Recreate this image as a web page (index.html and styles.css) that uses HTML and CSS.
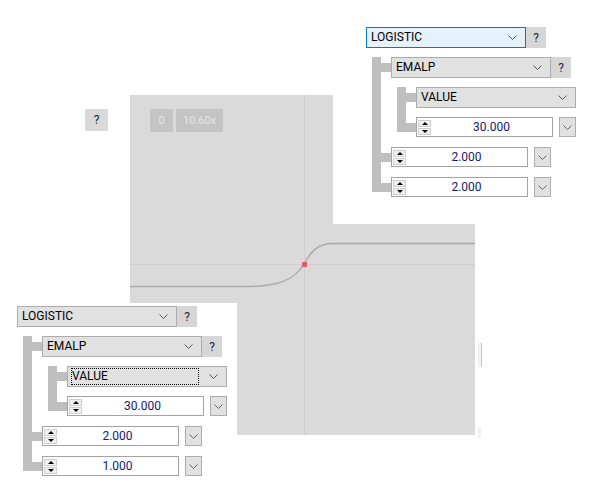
FILE: index.html
```html
<!DOCTYPE html>
<html lang="en">
<head>
    <meta charset="UTF-8">
    <title>Curve Editor</title>
    <link rel="stylesheet" href="styles.css">
</head>
<body>
<div id="desk">

    <div id="canvas">
        <svg class="plot" width="345" height="340" viewBox="0 0 345 340">
            <line x1="0" y1="169.5" x2="345" y2="169.5" stroke="#cecece" stroke-width="1"/>
            <line x1="174.5" y1="0" x2="174.5" y2="340" stroke="#cecece" stroke-width="1"/>
            <path d="M0 191.5 H117 C150 191.5 165 184 174 169 C181 156 188 148.5 203 148.5 H345" fill="none" stroke="#a9a9a9" stroke-width="1.4"/>
            <rect x="172" y="167" width="5" height="5" fill="#e0606a"/>
        </svg>
        <div class="tools">
            <div class="tool small">0</div>
            <div class="tool">10.60x</div>
        </div>
    </div>

    <div class="qbtn">?</div>

    <div class="mark mark-a"></div>
    <div class="mark mark-b"></div>

    <!-- upper editor -->
    <div class="panel panel-top">
        <div class="node">
            <div class="row">
                <div class="combo focus"><span class="label">LOGISTIC</span><svg class="chev" width="9" height="5"><polyline points="0.5,0.5 4.5,4.5 8.5,0.5" fill="none" stroke="#555" stroke-width="1"/></svg></div>
                <div class="help">?</div>
            </div>
            <div class="kids">
                <div class="node">
                    <div class="row">
                        <div class="combo"><span class="label">EMALP</span><svg class="chev" width="9" height="5"><polyline points="0.5,0.5 4.5,4.5 8.5,0.5" fill="none" stroke="#555" stroke-width="1"/></svg></div>
                        <div class="help">?</div>
                    </div>
                    <div class="kids">
                        <div class="node">
                            <div class="row">
                                <div class="combo"><span class="label">VALUE</span><svg class="chev" width="9" height="5"><polyline points="0.5,0.5 4.5,4.5 8.5,0.5" fill="none" stroke="#555" stroke-width="1"/></svg></div>
                            </div>
                        </div>
                        <div class="node">
                            <div class="row">
                                <div class="spinbox"><div class="spin"><div class="arr up"></div><div class="arr down"></div></div><span class="num">30.000</span></div>
                                <div class="drop"><svg width="9" height="5"><polyline points="0.5,0.5 4.5,4.5 8.5,0.5" fill="none" stroke="#666" stroke-width="1"/></svg></div>
                            </div>
                        </div>
                    </div>
                </div>
                <div class="node">
                    <div class="row">
                        <div class="spinbox"><div class="spin"><div class="arr up"></div><div class="arr down"></div></div><span class="num">2.000</span></div>
                        <div class="drop"><svg width="9" height="5"><polyline points="0.5,0.5 4.5,4.5 8.5,0.5" fill="none" stroke="#666" stroke-width="1"/></svg></div>
                    </div>
                </div>
                <div class="node">
                    <div class="row">
                        <div class="spinbox"><div class="spin"><div class="arr up"></div><div class="arr down"></div></div><span class="num">2.000</span></div>
                        <div class="drop"><svg width="9" height="5"><polyline points="0.5,0.5 4.5,4.5 8.5,0.5" fill="none" stroke="#666" stroke-width="1"/></svg></div>
                    </div>
                </div>
            </div>
        </div>
    </div>

    <!-- lower editor -->
    <div class="panel panel-bottom">
        <div class="node">
            <div class="row">
                <div class="combo"><span class="label">LOGISTIC</span><svg class="chev" width="9" height="5"><polyline points="0.5,0.5 4.5,4.5 8.5,0.5" fill="none" stroke="#555" stroke-width="1"/></svg></div>
                <div class="help">?</div>
            </div>
            <div class="kids">
                <div class="node">
                    <div class="row">
                        <div class="combo"><span class="label">EMALP</span><svg class="chev" width="9" height="5"><polyline points="0.5,0.5 4.5,4.5 8.5,0.5" fill="none" stroke="#555" stroke-width="1"/></svg></div>
                        <div class="help">?</div>
                    </div>
                    <div class="kids">
                        <div class="node">
                            <div class="row">
                                <div class="combo"><span class="label dotted">VALUE</span><svg class="chev" width="9" height="5"><polyline points="0.5,0.5 4.5,4.5 8.5,0.5" fill="none" stroke="#555" stroke-width="1"/></svg></div>
                            </div>
                        </div>
                        <div class="node">
                            <div class="row">
                                <div class="spinbox"><div class="spin"><div class="arr up"></div><div class="arr down"></div></div><span class="num">30.000</span></div>
                                <div class="drop"><svg width="9" height="5"><polyline points="0.5,0.5 4.5,4.5 8.5,0.5" fill="none" stroke="#666" stroke-width="1"/></svg></div>
                            </div>
                        </div>
                    </div>
                </div>
                <div class="node">
                    <div class="row">
                        <div class="spinbox"><div class="spin"><div class="arr up"></div><div class="arr down"></div></div><span class="num">2.000</span></div>
                        <div class="drop"><svg width="9" height="5"><polyline points="0.5,0.5 4.5,4.5 8.5,0.5" fill="none" stroke="#666" stroke-width="1"/></svg></div>
                    </div>
                </div>
                <div class="node">
                    <div class="row">
                        <div class="spinbox"><div class="spin"><div class="arr up"></div><div class="arr down"></div></div><span class="num">1.000</span></div>
                        <div class="drop"><svg width="9" height="5"><polyline points="0.5,0.5 4.5,4.5 8.5,0.5" fill="none" stroke="#666" stroke-width="1"/></svg></div>
                    </div>
                </div>
            </div>
        </div>
    </div>

</div>
</body>
</html>
```

FILE: styles.css
```css
body {
    margin: 0;
    background: #ffffff;
    font-family: Roboto, "Liberation Sans", Arial, sans-serif;
    font-size: 12px;
    color: #000;
}

#desk {
    position: relative;
    width: 608px;
    height: 502px;
    overflow: hidden;
}

/* graph area */
#canvas {
    position: absolute;
    left: 130px;
    top: 95px;
    width: 345px;
    height: 340px;
    background: #dadada;
}
#canvas .plot {
    position: absolute;
    left: 0;
    top: 0;
}
.tools {
    position: relative;
    display: flex;
    gap: 3px;
    padding: 14px 0 0 20px;
}
.tool {
    height: 23px;
    width: 47px;
    background: #c4c4c4;
    color: #e4e4e4;
    font-size: 11px;
    display: flex;
    align-items: center;
    justify-content: center;
}
.tool.small {
    width: 23px;
}

.qbtn {
    position: absolute;
    left: 85px;
    top: 109px;
    width: 23px;
    height: 22px;
    background: #d9d9d9;
    color: #1d2340;
    display: flex;
    align-items: center;
    justify-content: center;
}

.mark {
    position: absolute;
    left: 478px;
    width: 3px;
    background: #f1f1f1;
}
.mark-a {
    top: 343px;
    height: 24px;
    border-right: 1px solid #f3c767;
}
.mark-b {
    top: 427px;
    height: 11px;
}

/* editor panels */
.panel {
    position: absolute;
    background: #ffffff;
    box-sizing: border-box;
}
.panel-top {
    left: 333px;
    top: 0;
    width: 275px;
    height: 224px;
    padding: 27px 0 0 33px;
}
.panel-bottom {
    left: 0;
    top: 303px;
    width: 237px;
    height: 199px;
    padding: 3px 0 0 17px;
}

.row {
    display: flex;
    height: 21px;
}
.kids {
    position: relative;
    padding-left: 25px;
}
.kids::before {
    content: '';
    position: absolute;
    left: 6px;
    top: 0;
    bottom: 6px;
    width: 9px;
    background: #bfbfbf;
}
.kids > .node {
    position: relative;
    margin-top: 9px;
}
.kids > .node::before {
    content: '';
    position: absolute;
    left: -19px;
    top: 6px;
    width: 19px;
    height: 9px;
    background: #bfbfbf;
}

.combo {
    box-sizing: border-box;
    width: 160px;
    height: 21px;
    background: #e1e1e1;
    border: 1px solid #adadad;
    display: flex;
    align-items: center;
    padding: 0 8px 0 3px;
}
.combo.focus {
    background: #e5f1fb;
    border-color: #0078d7;
}
.combo .label {
    flex: 1;
    padding-left: 1px;
    line-height: 15px;
}
.combo .label.dotted {
    border: 1px dotted #000;
    margin-right: 10px;
    line-height: 15px;
    padding-left: 0;
}
.chev {
    display: block;
}

.help {
    width: 20px;
    height: 21px;
    background: #d6d6d6;
    color: #1d2340;
    display: flex;
    align-items: center;
    justify-content: center;
}

.spinbox {
    box-sizing: border-box;
    width: 137px;
    height: 20px;
    border: 1px solid #a3a3a3;
    background: #fff;
    display: flex;
    align-items: center;
    padding-left: 1px;
}
.spin {
    width: 13px;
    display: flex;
    flex-direction: column;
    gap: 1px;
}
.arr {
    box-sizing: border-box;
    height: 7px;
    background: #f0f0f0;
    border: 1px solid #cfcfcf;
    display: flex;
    align-items: center;
    justify-content: center;
}
.arr::after {
    content: '';
    border-left: 3px solid transparent;
    border-right: 3px solid transparent;
}
.arr.up::after {
    border-bottom: 3px solid #000;
}
.arr.down::after {
    border-top: 3px solid #000;
}
.num {
    flex: 1;
    text-align: center;
    color: #161a6a;
}

.drop {
    box-sizing: border-box;
    width: 17px;
    height: 20px;
    margin-left: 6px;
    background: #e1e1e1;
    border: 1px solid #adadad;
    display: flex;
    align-items: center;
    justify-content: center;
}
.drop svg {
    display: block;
}
```
